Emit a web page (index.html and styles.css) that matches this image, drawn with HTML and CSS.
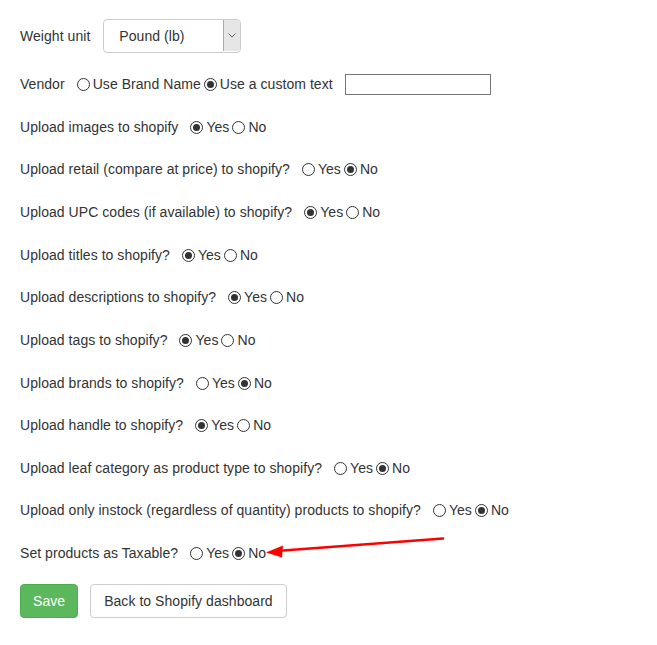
FILE: index.html
```html
<!DOCTYPE html>
<html>
<head>
<meta charset="utf-8">
<link rel="stylesheet" href="styles.css">
</head>
<body>
<div class="form">
  <div class="row row-first">
    <span class="label">Weight unit</span>
    <div class="select">
      <span class="select-text">Pound (lb)</span>
      <span class="select-arrow"><svg width="8" height="5" viewBox="0 0 8 5"><path d="M0.5 0.5 L4 4 L7.5 0.5" fill="none" stroke="#666" stroke-width="1"/></svg></span>
    </div>
  </div>
  <div class="row">
    <span class="label">Vendor</span>
    <span class="opt"><span class="radio"></span>Use Brand Name</span>
    <span class="opt"><span class="radio on"></span>Use a custom text</span>
    <span class="text-input"></span>
  </div>
  <div class="row">
    <span class="label">Upload images to shopify</span>
    <span class="opt"><span class="radio on"></span>Yes</span>
    <span class="opt"><span class="radio"></span>No</span>
  </div>
  <div class="row">
    <span class="label">Upload retail (compare at price) to shopify?</span>
    <span class="opt"><span class="radio"></span>Yes</span>
    <span class="opt"><span class="radio on"></span>No</span>
  </div>
  <div class="row">
    <span class="label">Upload UPC codes (if available) to shopify?</span>
    <span class="opt"><span class="radio on"></span>Yes</span>
    <span class="opt"><span class="radio"></span>No</span>
  </div>
  <div class="row">
    <span class="label">Upload titles to shopify?</span>
    <span class="opt"><span class="radio on"></span>Yes</span>
    <span class="opt"><span class="radio"></span>No</span>
  </div>
  <div class="row">
    <span class="label">Upload descriptions to shopify?</span>
    <span class="opt"><span class="radio on"></span>Yes</span>
    <span class="opt"><span class="radio"></span>No</span>
  </div>
  <div class="row">
    <span class="label">Upload tags to shopify?</span>
    <span class="opt"><span class="radio on"></span>Yes</span>
    <span class="opt"><span class="radio"></span>No</span>
  </div>
  <div class="row">
    <span class="label">Upload brands to shopify?</span>
    <span class="opt"><span class="radio"></span>Yes</span>
    <span class="opt"><span class="radio on"></span>No</span>
  </div>
  <div class="row">
    <span class="label">Upload handle to shopify?</span>
    <span class="opt"><span class="radio on"></span>Yes</span>
    <span class="opt"><span class="radio"></span>No</span>
  </div>
  <div class="row">
    <span class="label">Upload leaf category as product type to shopify?</span>
    <span class="opt"><span class="radio"></span>Yes</span>
    <span class="opt"><span class="radio on"></span>No</span>
  </div>
  <div class="row">
    <span class="label">Upload only instock (regardless of quantity) products to shopify?</span>
    <span class="opt"><span class="radio"></span>Yes</span>
    <span class="opt"><span class="radio on"></span>No</span>
  </div>
  <div class="row">
    <span class="label">Set products as Taxable?</span>
    <span class="opt"><span class="radio"></span>Yes</span>
    <span class="opt"><span class="radio on"></span>No</span>
  </div>
  <div class="buttons">
    <button class="btn btn-save">Save</button>
    <button class="btn btn-back">Back to Shopify dashboard</button>
  </div>
</div>
<svg class="arrow" width="657" height="645" viewBox="0 0 657 645">
  <line x1="443" y1="538.5" x2="280" y2="550.8" stroke="#f00" stroke-width="2.5" stroke-linecap="round"/>
  <path d="M266 552.5 L283 545.5 L282 557.5 Z" fill="#f00"/>
</svg>
</body>
</html>
```

FILE: styles.css
```css
html, body {
  margin: 0;
  padding: 0;
  background: #fff;
}
body {
  font-family: "Liberation Sans", Arial, sans-serif;
  font-size: 14px;
  letter-spacing: 0.05px;
  color: #333;
  position: relative;
  width: 657px;
  height: 645px;
  overflow: hidden;
}
.form {
  display: flex;
  flex-direction: column;
  gap: 22.65px;
  padding: 19px 20px 0;
}
.row {
  display: flex;
  align-items: center;
  height: 20px;
  line-height: 20px;
  white-space: nowrap;
}
.row-first {
  height: 34px;
  margin-bottom: -1.6px;
}
.label {
  margin-right: 12px;
}
.row-first .label {
  margin-right: 13px;
}
.opt {
  display: inline-flex;
  align-items: center;
  margin-right: 3px;
}
.radio {
  box-sizing: border-box;
  width: 13px;
  height: 13px;
  border: 1px solid #333;
  border-radius: 50%;
  margin-right: 3px;
  margin-top: 1px;
  position: relative;
  background: #fff;
}
.radio.on::after {
  content: "";
  position: absolute;
  left: 2px;
  top: 2px;
  width: 7px;
  height: 7px;
  border-radius: 50%;
  background: #333;
}
.text-input {
  box-sizing: border-box;
  width: 146px;
  height: 21px;
  border: 1px solid #767676;
  margin-left: 9px;
  background: #fff;
}
.select {
  box-sizing: border-box;
  width: 138px;
  height: 34px;
  border: 1px solid #ccc;
  border-radius: 4px;
  display: flex;
  align-items: stretch;
  background: #fff;
  overflow: hidden;
}
.select-text {
  flex: 1;
  padding-left: 15px;
  line-height: 32px;
  color: #333;
}
.select-arrow {
  width: 16px;
  margin: 0 0 1px 0;
  background: #e6e6e6;
  border-left: 1px solid #a9a9a9;
  display: flex;
  align-items: center;
  justify-content: center;
}
.buttons {
  display: flex;
  gap: 12px;
  margin-top: -1.6px;
}
.btn {
  font-family: "Liberation Sans", Arial, sans-serif;
  font-size: 14px;
  letter-spacing: 0.05px;
  line-height: 20px;
  height: 34px;
  padding: 6px 12px;
  border-radius: 4px;
  border: 1px solid transparent;
  box-sizing: border-box;
  cursor: pointer;
}
.btn-save {
  background: #5cb85c;
  border-color: #4cae4c;
  color: #fff;
}
.btn-back {
  background: #fff;
  border-color: #ccc;
  color: #333;
  padding: 6px 13px;
}
.arrow {
  position: absolute;
  left: 0;
  top: 0;
  pointer-events: none;
}
```
